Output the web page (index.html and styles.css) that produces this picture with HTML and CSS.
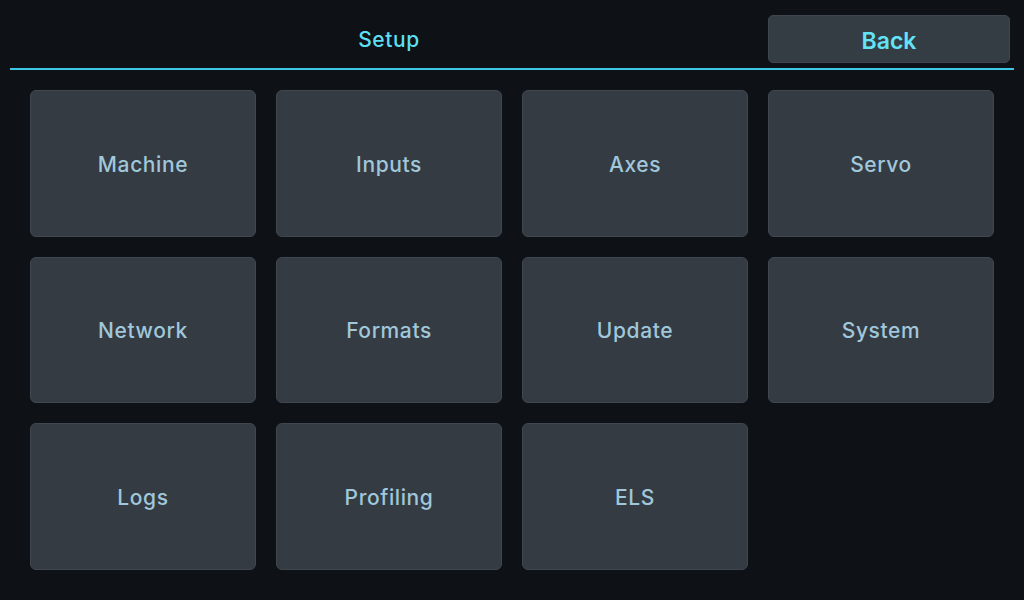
FILE: index.html
```html
<!DOCTYPE html>
<html>
<head>
<meta charset="utf-8">
<link rel="stylesheet" href="styles.css">
</head>
<body>
<div class="header">
  <div class="title">Setup</div>
  <button class="back">Back</button>
</div>
<div class="grid">
  <div class="tile">Machine</div>
  <div class="tile">Inputs</div>
  <div class="tile">Axes</div>
  <div class="tile">Servo</div>
  <div class="tile">Network</div>
  <div class="tile">Formats</div>
  <div class="tile">Update</div>
  <div class="tile">System</div>
  <div class="tile">Logs</div>
  <div class="tile">Profiling</div>
  <div class="tile">ELS</div>
</div>
</body>
</html>
```
FILE: styles.css
```css
html, body {
  margin: 0;
  padding: 0;
  background: #0e1115;
  width: 1024px;
  height: 600px;
  overflow: hidden;
  font-family: "Inter", "Noto Sans", sans-serif;
}
.header {
  margin: 0 10px;
  padding-top: 15px;
  padding-bottom: 5px;
  display: flex;
  align-items: stretch;
  border-bottom: 2px solid #3cc8e4;
}
.title {
  flex: 1;
  display: flex;
  align-items: center;
  justify-content: center;
  color: #5cdff2;
  font-size: 21px;
  font-weight: 500;
  letter-spacing: 0.6px;
  padding-bottom: 0;
  padding-top: 1px;
}
.back {
  width: 242px;
  height: 48px;
  margin-right: 4px;
  background: #343c44;
  border: 1px solid #3e4750;
  border-radius: 5px;
  color: #62e3f7;
  font-family: "Inter", "Noto Sans", sans-serif;
  font-size: 23px;
  font-weight: 600;
  padding: 3px 0 0 0;
}
.grid {
  margin: 20px 30px 0 30px;
  height: 480px;
  display: grid;
  grid-template-columns: repeat(4, 1fr);
  grid-template-rows: repeat(3, 1fr);
  gap: 20px;
}
.tile {
  background: #343b43;
  border: 1px solid #3f4851;
  border-radius: 6px;
  display: flex;
  align-items: center;
  justify-content: center;
  color: #a0c7da;
  font-size: 21px;
  font-weight: 500;
  letter-spacing: 0.6px;
  padding-top: 2px;
}
```
